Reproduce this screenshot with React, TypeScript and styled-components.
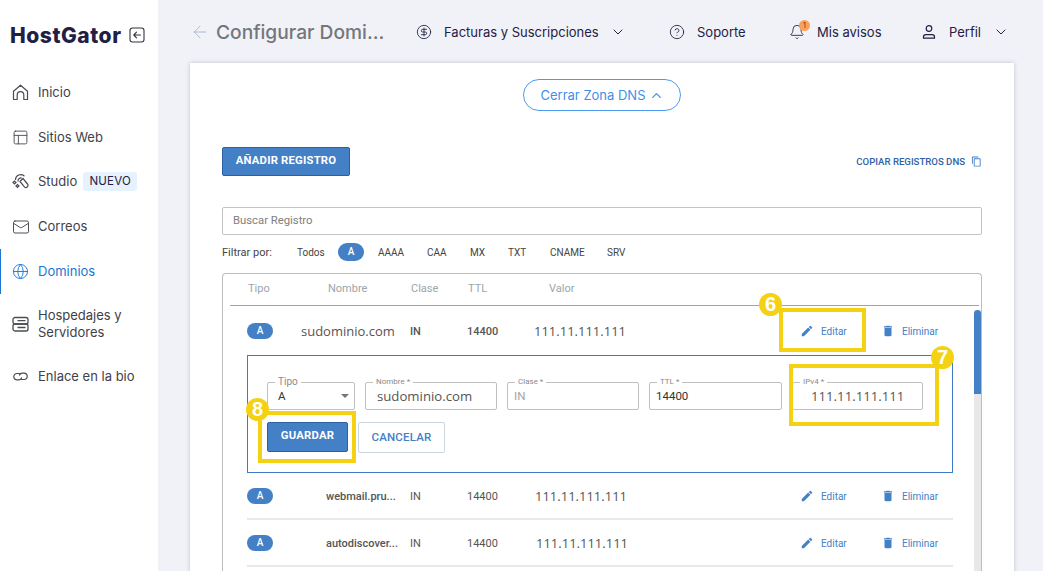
import React, { ReactNode } from 'react'
import styled, { createGlobalStyle } from 'styled-components'
import {
  ArrowLeft,
  Bell,
  ChevronDown,
  ChevronUp,
  CircleDollarSign,
  CircleHelp,
  Globe,
  Mail,
  PanelsTopLeft,
} from 'lucide-react'
import { MdDelete, MdEdit, MdOutlineContentCopy } from 'react-icons/md'

const GlobalStyle = createGlobalStyle`
  html, body {
    margin: 0;
    height: 571px;
    overflow: hidden;
    background: #f1f2f7;
  }
  * { box-sizing: border-box; }
`

const Page = styled.div`
  display: flex;
  width: 1043px;
  height: 571px;
  overflow: hidden;
  font-family: Inter, "Noto Sans", sans-serif;
`

const Sidebar = styled.aside`
  width: 158px;
  flex-shrink: 0;
  background: #fff;
  padding-top: 24px;
`

const Brand = styled.div`
  display: flex;
  align-items: center;
  justify-content: space-between;
  padding: 0 13px 0 10px;
  height: 22px;
  margin-bottom: 24px;
`

const Logo = styled.span`
  font-size: 21px;
  font-weight: 800;
  letter-spacing: 0.55px;
  color: #1f2044;
`

const NavItem = styled.div<{ $active?: boolean; $tall?: boolean }>`
  display: flex;
  align-items: center;
  gap: 9px;
  height: ${(p) => (p.$tall ? '60.2px' : '44.8px')};
  padding-left: 12px;
  font-size: 13px;
  line-height: 17px;
  color: ${(p) => (p.$active ? '#1a76d2' : '#3f4149')};
  box-shadow: ${(p) => (p.$active ? 'inset 1px 0 0 #1a76d2' : 'none')};
  svg { flex-shrink: 0; }
`

const NavIcon = styled.span`
  display: flex;
  width: 17px;
  justify-content: center;
`

const NavLabel = styled.span`
  display: flex;
  align-items: center;
  gap: 6px;
`

const NewTag = styled.span`
  width: 54px;
  height: 19px;
  background: #e6f2fd;
  border-radius: 3px;
  color: #1f2044;
  font-size: 11.5px;
  line-height: 19px;
  letter-spacing: 0.2px;
  text-align: center;
`

const Main = styled.main`
  flex: 1;
  min-width: 0;
  padding: 0 29px 0 32px;
`

const Header = styled.header`
  display: flex;
  align-items: center;
  height: 63px;
  color: #1f2044;
  font-size: 13px;
`

const BackTitle = styled.div`
  display: flex;
  align-items: center;
  gap: 6px;
  width: 226px;
  color: #73767c;
  font-size: 19.2px;
  font-weight: 500;
  white-space: nowrap;
`

const HeaderItem = styled.div<{ $width: number }>`
  display: flex;
  align-items: center;
  gap: 12px;
  width: ${(p) => p.$width}px;
  white-space: nowrap;
`

const Caret = styled(ChevronDown)<{ $shift?: number }>`
  margin-left: ${(p) => p.$shift ?? 0}px;
`

const BellWrap = styled.span`
  position: relative;
  display: flex;
`

const BellCount = styled.span`
  position: absolute;
  top: -4px;
  right: -5px;
  width: 11px;
  height: 11px;
  border-radius: 50%;
  background: #f7a15c;
  color: #5c3513;
  font-size: 7px;
  line-height: 11px;
  text-align: center;
`

const Card = styled.section`
  background: #fff;
  box-shadow: 0 0 4px rgba(40, 50, 90, 0.25);
  padding: 16px 32px 0;
  height: 520px;
  font-family: Roboto, sans-serif;
`

const ToggleRow = styled.div`
  display: flex;
  justify-content: center;
`

const ZoneToggle = styled.button`
  display: flex;
  align-items: center;
  gap: 3px;
  justify-content: center;
  width: 158px;
  height: 32px;
  background: #fff;
  border: 1px solid #4a9bef;
  border-radius: 16px;
  color: #3f8fe8;
  font-family: Inter, sans-serif;
  font-size: 13px;
`

const Actions = styled.div`
  display: flex;
  align-items: center;
  justify-content: space-between;
  margin-top: 36px;
`

const SolidButton = styled.button<{ $width: number; $height: number }>`
  width: ${(p) => p.$width}px;
  height: ${(p) => p.$height}px;
  background: #4480c6;
  border: 1px solid #2f5f9f;
  border-radius: 2px;
  color: #fff;
  font-family: Roboto, sans-serif;
  font-size: 11.3px;
  font-weight: 700;
  letter-spacing: 0.2px;
  padding: 0 0 3px;
`

const CopyLink = styled.a`
  display: flex;
  align-items: center;
  gap: 6px;
  color: #2f62a8;
  font-size: 9.6px;
  font-weight: 500;
  svg { color: #4480c6; }
`

const Search = styled.div`
  margin-top: 31px;
  height: 28px;
  border: 1px solid #c4c4c4;
  border-radius: 2px;
  padding-left: 10px;
  font-size: 11.3px;
  line-height: 26px;
  color: #808080;
`

const Filters = styled.div`
  display: flex;
  align-items: center;
  height: 18px;
  margin-top: 8px;
  font-size: 10px;
  color: #444;
`

const FilterLabel = styled.span`
  width: 75px;
  font-size: 11px;
`

const Chip = styled.span<{ $active?: boolean; $width: number }>`
  width: ${(p) => p.$width}px;
  ${(p) =>
    p.$active &&
    `
    height: 18px;
    line-height: 18px;
    margin-right: 14px;
    text-align: center;
    border-radius: 9px;
    background: #4480c6;
    color: #fff;
    font-weight: 500;
  `}
`

const Table = styled.div`
  position: relative;
  margin-top: 12px;
  height: 320px;
  border: 1px solid #bdbdbd;
  border-bottom: 0;
  border-radius: 4px 4px 0 0;
  padding-left: 24px;
`

const TableHead = styled.div`
  display: grid;
  grid-template-columns: 80px 83px 57px 81px auto;
  height: 32px;
  margin: 0 2px 0 -17px;
  padding-left: 18px;
  border-bottom: 1px solid #9aa5ad;
  font-size: 11px;
  line-height: 30px;
  color: #9aa5ad;
`

const Row = styled.div`
  display: grid;
  grid-template-columns: 54px 109px 57px 67px 266px 81px auto;
  align-items: center;
  width: 706px;
  height: 49px;
  padding-top: 1px;
  font-size: 11px;
  font-weight: 500;
  color: #555;
`

const ListRow = styled(Row)`
  height: 47px;
  border-bottom: 2px solid #e9e9e9;
  font-weight: 400;
`

const TypeBadge = styled.span`
  width: 26px;
  height: 16px;
  border-radius: 8px;
  background: #4480c6;
  color: #fff;
  font-size: 10px;
  font-weight: 500;
  line-height: 16px;
  text-align: center;
`

const Name = styled.span<{ $large?: boolean }>`
  padding-left: ${(p) => (p.$large ? '0' : '25px')};
  font-family: ${(p) => (p.$large ? '"Open Sans", sans-serif' : 'Roboto, sans-serif')};
  font-size: ${(p) => (p.$large ? '13px' : '11px')};
  font-weight: ${(p) => (p.$large ? 400 : 500)};
  white-space: nowrap;
`

const Address = styled.span<{ $indent?: number }>`
  padding-left: ${(p) => p.$indent ?? 0}px;
  font-family: "Open Sans", sans-serif;
  font-size: 13px;
  font-weight: 400;
  color: #555;
  white-space: nowrap;
`

const RowAction = styled.span`
  position: relative;
  display: flex;
  align-items: center;
  gap: 7px;
  color: #4480c6;
  font-size: 10px;
  font-weight: 400;
  svg { flex-shrink: 0; }
`

const Editor = styled.div`
  width: 706px;
  height: 118px;
  border: 1px solid #3f7cc4;
  padding: 21px 19px 0;
`

const FieldRow = styled.div`
  display: grid;
  grid-template-columns: 88px 132px 132px 133px 131px;
  gap: 10px;
  align-items: start;
`

const Field = styled.fieldset`
  position: relative;
  margin: 0;
  height: 33px;
  padding: 0 0 0 7px;
  min-width: 0;
  border: 1px solid #c0c0c0;
  border-radius: 2px;
  color: #333;
`

const FieldLabel = styled.legend<{ $large?: boolean }>`
  padding: 0 3px;
  font-size: ${(p) => (p.$large ? '10px' : '8px')};
  line-height: 10px;
  color: #8a8a8a;
`

const FieldValue = styled.div<{ $muted?: boolean; $large?: boolean; $shift?: number }>`
  margin-left: ${(p) => p.$shift ?? 0}px;
  font-family: ${(p) => (p.$large ? '"Open Sans", sans-serif' : 'Roboto, sans-serif')};
  font-size: ${(p) => (p.$large ? '13.2px' : '11.5px')};
  line-height: 18px;
  color: ${(p) => (p.$muted ? '#a4a4a4' : p.$large ? '#555' : '#333')};
  white-space: nowrap;
`

const SelectCaret = styled.span`
  position: absolute;
  right: 5px;
  top: 7px;
  width: 0;
  height: 0;
  border-left: 4px solid transparent;
  border-right: 4px solid transparent;
  border-top: 4px solid #757575;
`

const EditorButtons = styled.div`
  display: flex;
  gap: 10px;
  margin-top: 12px;
`

const GhostButton = styled.button`
  width: 87px;
  height: 31px;
  padding: 0 0 2px;
  background: #fff;
  border: 1px solid #c9d6e0;
  border-radius: 2px;
  color: #4480c6;
  font-family: Roboto, sans-serif;
  font-size: 11.5px;
  font-weight: 500;
  letter-spacing: 0.2px;
`

const ScrollTrack = styled.div`
  position: absolute;
  top: 36px;
  right: 0;
  bottom: 0;
  width: 7px;
  background: #e8e8e8;
`

const ScrollThumb = styled.div`
  height: 84px;
  border-radius: 4px 4px 0 0;
  background: #4480c6;
`

const Highlight = styled.span<{ $top: number; $left: number; $width: number; $height: number }>`
  position: absolute;
  top: ${(p) => p.$top}px;
  left: ${(p) => p.$left}px;
  width: ${(p) => p.$width}px;
  height: ${(p) => p.$height}px;
  border: 4px solid #f4d213;
  pointer-events: none;
  z-index: 2;
`

const Marker = styled.span<{ $top: number; $left: number }>`
  position: absolute;
  top: ${(p) => p.$top}px;
  left: ${(p) => p.$left}px;
  width: 23px;
  height: 23px;
  border-radius: 50%;
  background: #f4d213;
  color: #fff;
  font-family: "Liberation Sans", sans-serif;
  font-size: 20px;
  font-weight: 700;
  line-height: 23px;
  text-align: center;
  z-index: 3;
`

const Anchor = styled.div`
  position: relative;
`

const HomeIcon = () => (
  <svg width="17" height="17" viewBox="0 0 17 17" fill="none" stroke="#4a4c54" strokeWidth="1.2" strokeLinejoin="round">
    <path d="M1.5 15.5V7.2L8.5 1.2l7 6v8.3h-3.7v-4.6a3.3 3.3 0 0 0-6.6 0v4.6z" />
  </svg>
)

const StudioIcon = () => (
  <svg width="17" height="17" viewBox="0 0 17 17" fill="none" stroke="#4a4c54" strokeWidth="1.2" strokeLinecap="round">
    <path d="M3.5 6.5A5.2 5.2 0 0 1 12 2.8" />
    <path d="M6 8a3 3 0 0 1 3.4-3" />
    <path d="M8 8.5l3-3 4.5 5.5c.8 1 .6 2.3-.3 3s-2 .7-2.8-.2z" />
    <path d="M1 9.5l1.5-1.5L4 9.5 2.5 11zM4 13l1.5-1.5L7 13l-1.5 1.5z" />
  </svg>
)

const ServerIcon = () => (
  <svg width="17" height="17" viewBox="0 0 17 17" fill="none" stroke="#4a4c54" strokeWidth="1.3" strokeLinecap="round">
    <rect x="1" y="1.5" width="15" height="6.5" rx="2" />
    <rect x="1" y="8" width="15" height="7" rx="2" />
    <path d="M6 4.7h7M6 11.5h7" />
  </svg>
)

const ChainIcon = () => (
  <svg width="17" height="17" viewBox="0 0 17 17" fill="none" stroke="#4a4c54" strokeWidth="1.2" strokeLinecap="round">
    <path d="M7.6 5.5H5a3.2 3.2 0 0 0 0 6.4h1.6c1.4 0 2.4-.8 2.9-2" />
    <path d="M9.4 11.5H12a3.2 3.2 0 0 0 0-6.4h-1.6c-1.4 0-2.4.8-2.9 2" />
  </svg>
)

const CollapseIcon = () => (
  <svg width="16" height="16" viewBox="0 0 16 16" fill="none" stroke="#33353d" strokeWidth="1.1" strokeLinecap="round" strokeLinejoin="round">
    <rect x="1" y="1" width="14" height="14" rx="2.5" />
    <path d="M11.5 8H5M7.5 5.2 4.8 8l2.7 2.8" />
  </svg>
)

const ProfileIcon = () => (
  <svg width="16" height="16" viewBox="0 0 16 16" fill="none" stroke="#1f2044" strokeWidth="1.2" strokeLinecap="round">
    <circle cx="8" cy="4.5" r="2.8" />
    <path d="M2.5 14.2v-1.4c0-1.3 1-2.2 2.3-2.2h6.4c1.3 0 2.3.9 2.3 2.2v1.4z" />
  </svg>
)

interface NavEntry {
  label: ReactNode
  icon: ReactNode
  tag?: string
  active?: boolean
  tall?: boolean
}

const navIconProps = { size: 17, strokeWidth: 1.3, color: '#4a4c54' }

const navEntries: NavEntry[] = [
  { label: 'Inicio', icon: <HomeIcon /> },
  { label: 'Sitios Web', icon: <PanelsTopLeft {...navIconProps} /> },
  { label: 'Studio', icon: <StudioIcon />, tag: 'NUEVO' },
  { label: 'Correos', icon: <Mail {...navIconProps} size={18} /> },
  { label: 'Dominios', icon: <Globe {...navIconProps} color="#1a76d2" />, active: true },
  { label: <span>Hospedajes y<br />Servidores</span>, icon: <ServerIcon />, tall: true },
  { label: 'Enlace en la bio', icon: <ChainIcon /> },
]

const filters: { label: string; width: number; active?: boolean }[] = [
  { label: 'Todos', width: 41 },
  { label: 'A', width: 26, active: true },
  { label: 'AAAA', width: 49 },
  { label: 'CAA', width: 43 },
  { label: 'MX', width: 38 },
  { label: 'TXT', width: 42 },
  { label: 'CNAME', width: 57 },
  { label: 'SRV', width: 30 },
]

const records = [
  { name: 'webmail.pru...', ip: '111.11.111.111', indent: 1 },
  { name: 'autodiscover...', ip: '111.11.111.111', indent: 2 },
]

const EditAction = ({ children }: { children?: ReactNode }) => (
  <RowAction>
    <MdEdit size={14} />
    Editar
    {children}
  </RowAction>
)

const DeleteAction = () => (
  <RowAction>
    <MdDelete size={14} />
    Eliminar
  </RowAction>
)

export default function App() {
  return (
    <>
      <GlobalStyle />
      <Page>
        <Sidebar>
          <Brand>
            <Logo>HostGator</Logo>
            <CollapseIcon />
          </Brand>
          {navEntries.map((entry, i) => (
            <NavItem key={i} $active={entry.active} $tall={entry.tall}>
              <NavIcon>{entry.icon}</NavIcon>
              <NavLabel>
                {entry.label}
                {entry.tag && <NewTag>{entry.tag}</NewTag>}
              </NavLabel>
            </NavItem>
          ))}
        </Sidebar>
        <Main>
          <Header>
            <BackTitle>
              <ArrowLeft size={20} strokeWidth={1.1} color="#a9b6cc" />
              Configurar Domi...
            </BackTitle>
            <HeaderItem $width={253}>
              <CircleDollarSign size={16} strokeWidth={1.3} />
              Facturas y Suscripciones
              <Caret size={16} strokeWidth={1.5} $shift={-1} />
            </HeaderItem>
            <HeaderItem $width={120}>
              <CircleHelp size={16} strokeWidth={1.3} />
              Soporte
            </HeaderItem>
            <HeaderItem $width={132}>
              <BellWrap>
                <Bell size={16} strokeWidth={1.3} />
                <BellCount>1</BellCount>
              </BellWrap>
              Mis avisos
            </HeaderItem>
            <HeaderItem $width={90}>
              <ProfileIcon />
              Perfil
              <Caret size={16} strokeWidth={1.5} />
            </HeaderItem>
          </Header>
          <Card>
            <ToggleRow>
              <ZoneToggle>
                Cerrar Zona DNS <ChevronUp size={15} strokeWidth={2} />
              </ZoneToggle>
            </ToggleRow>
            <Actions>
              <SolidButton $width={128} $height={29}>AÑADIR REGISTRO</SolidButton>
              <CopyLink>
                COPIAR REGISTROS DNS
                <MdOutlineContentCopy size={11} />
              </CopyLink>
            </Actions>
            <Search>Buscar Registro</Search>
            <Filters>
              <FilterLabel>Filtrar por:</FilterLabel>
              {filters.map((f) => (
                <Chip key={f.label} $active={f.active} $width={f.width}>{f.label}</Chip>
              ))}
            </Filters>
            <Table>
              <TableHead>
                <span>Tipo</span>
                <span>Nombre</span>
                <span>Clase</span>
                <span>TTL</span>
                <span>Valor</span>
              </TableHead>
              <Row>
                <TypeBadge>A</TypeBadge>
                <Name $large>sudominio.com</Name>
                <span>IN</span>
                <span>14400</span>
                <Address>111.11.111.111</Address>
                <EditAction>
                  <Highlight $top={-16} $left={-21} $width={87} $height={44} />
                  <Marker $top={-31} $left={-41}>6</Marker>
                </EditAction>
                <DeleteAction />
              </Row>
              <Editor>
                <FieldRow>
                  <Field>
                    <FieldLabel $large>Tipo</FieldLabel>
                    <FieldValue $shift={3}>A</FieldValue>
                    <SelectCaret />
                  </Field>
                  <Field>
                    <FieldLabel>Nombre *</FieldLabel>
                    <FieldValue $large $shift={4}>sudominio.com</FieldValue>
                  </Field>
                  <Field>
                    <FieldLabel>Clase *</FieldLabel>
                    <FieldValue $muted $shift={-1}>IN</FieldValue>
                  </Field>
                  <Field>
                    <FieldLabel>TTL *</FieldLabel>
                    <FieldValue $shift={-1}>14400</FieldValue>
                  </Field>
                  <Anchor>
                    <Field>
                      <FieldLabel>IPv4 *</FieldLabel>
                      <FieldValue $large $shift={11}>111.11.111.111</FieldValue>
                    </Field>
                    <Highlight $top={-13} $left={-3} $width={150} $height={62} />
                    <Marker $top={-31} $left={139}>7</Marker>
                  </Anchor>
                </FieldRow>
                <EditorButtons>
                  <Anchor>
                    <SolidButton $width={81} $height={30}>GUARDAR</SolidButton>
                    <Highlight $top={-11} $left={-9} $width={98} $height={52} />
                    <Marker $top={-24} $left={-21}>8</Marker>
                  </Anchor>
                  <GhostButton>CANCELAR</GhostButton>
                </EditorButtons>
              </Editor>
              {records.map((r) => (
                <ListRow key={r.name}>
                  <TypeBadge>A</TypeBadge>
                  <Name>{r.name}</Name>
                  <span>IN</span>
                  <span>14400</span>
                  <Address $indent={r.indent}>{r.ip}</Address>
                  <EditAction />
                  <DeleteAction />
                </ListRow>
              ))}
              <ScrollTrack>
                <ScrollThumb />
              </ScrollTrack>
            </Table>
          </Card>
        </Main>
      </Page>
    </>
  )
}
